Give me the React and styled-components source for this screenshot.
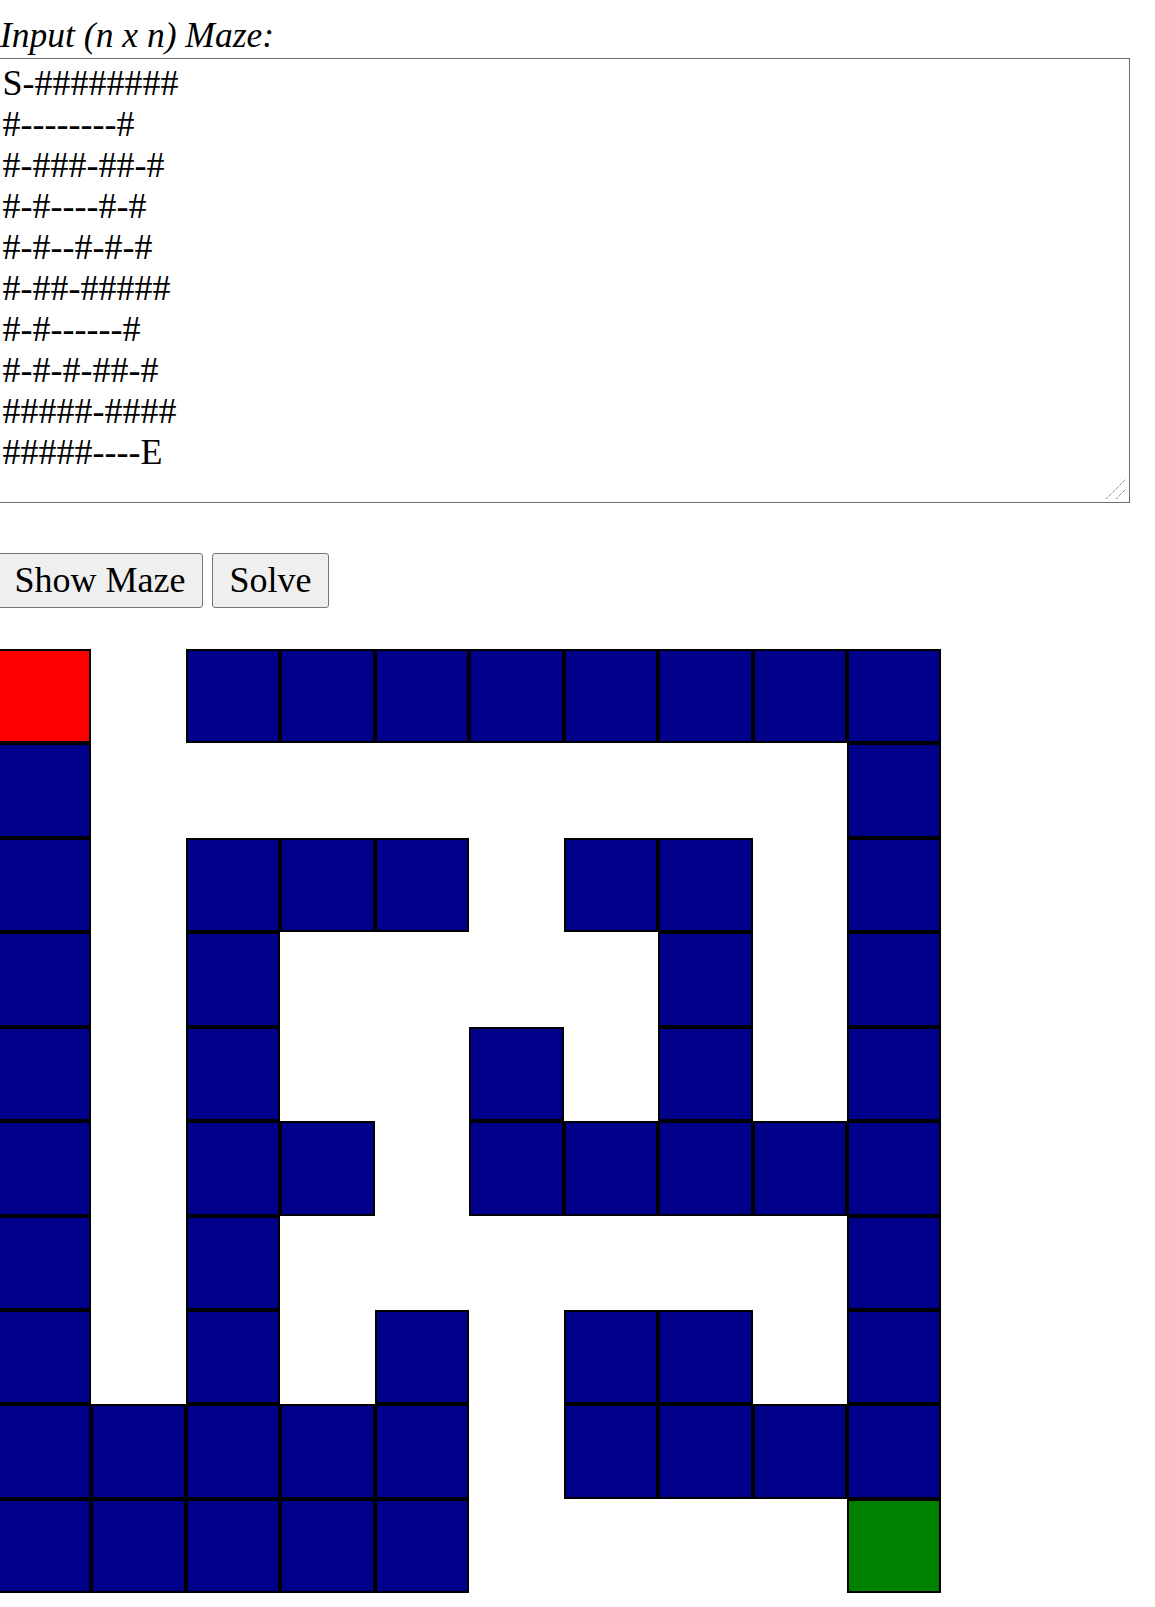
import React, { Component } from "react";
import styled, { createGlobalStyle } from "styled-components";

const MAZE = [
  "S-########",
  "#--------#",
  "#-###-##-#",
  "#-#----#-#",
  "#-#--#-#-#",
  "#-##-#####",
  "#-#------#",
  "#-#-#-##-#",
  "#####-####",
  "#####----E",
];

const CELL = 94.45;

const cellColors = {
  "#": "#00008b",
  S: "#ff0000",
  E: "#008000",
};

const GlobalStyle = createGlobalStyle`
  html, body {
    margin: 0;
    padding: 0;
    background: #ffffff;
  }
  body {
    font-family: "Liberation Serif", "Times New Roman", serif;
    color: #000000;
  }
`;

const Page = styled.div`
  margin-left: -3px;
  padding-top: 15px;
  padding-bottom: 13px;
`;

const Label = styled.label`
  display: block;
  font-style: italic;
  font-size: 35.5px;
  line-height: 40.9px;
  padding-left: 3px;
`;

const InputBox = styled.div`
  position: relative;
  width: 1133px;
  margin-top: 2px;
`;

const MazeInput = styled.textarea`
  display: block;
  box-sizing: border-box;
  width: 100%;
  height: 445px;
  padding: 4.5px;
  border: 1px solid #6b6b6b;
  border-radius: 0;
  font-family: "Liberation Serif", "Times New Roman", serif;
  font-size: 36px;
  line-height: 40.9px;
  color: #000000;
  background: #ffffff;
  outline: none;
  resize: none;
`;

const Grip = styled.svg`
  position: absolute;
  right: 2px;
  bottom: 2px;
  width: 24px;
  height: 24px;
  pointer-events: none;
`;

const ButtonRow = styled.div`
  display: flex;
  gap: 9px;
  margin-top: 50px;
`;

const Button = styled.button`
  box-sizing: border-box;
  height: 55px;
  padding: 6px 16.5px;
  border: 1px solid #767676;
  border-radius: 3px;
  background: #efefef;
  font-family: "Liberation Serif", "Times New Roman", serif;
  font-size: 36px;
  line-height: 40.9px;
  color: #000000;
  cursor: pointer;
`;

const Grid = styled.div`
  display: grid;
  grid-template-columns: repeat(10, ${CELL}px);
  grid-auto-rows: ${CELL}px;
  margin-top: 41px;
`;

const Cell = styled.div`
  box-sizing: border-box;
  background: ${(p) => p.$fill || "transparent"};
  border: 2px solid ${(p) => (p.$fill ? "#000000" : "transparent")};
`;

export default class App extends Component {
  state = {
    text: MAZE.join("\n"),
  };

  render() {
    const { text } = this.state;
    return (
      <Page>
        <GlobalStyle />
        <Label htmlFor="maze">Input (n x n) Maze:</Label>
        <InputBox>
          <MazeInput
            id="maze"
            spellCheck={false}
            value={text}
            onChange={(e) => this.setState({ text: e.target.value })}
          />
          <Grip viewBox="0 0 24 24">
            <line x1="2" y1="22" x2="22" y2="2" stroke="#555" strokeWidth="1" strokeDasharray="1 1" />
            <line x1="12" y1="22" x2="22" y2="12" stroke="#555" strokeWidth="1" strokeDasharray="1 1" />
          </Grip>
        </InputBox>
        <ButtonRow>
          <Button>Show Maze</Button>
          <Button>Solve</Button>
        </ButtonRow>
        <Grid>
          {MAZE.map((row, r) =>
            row.split("").map((ch, c) => (
              <Cell key={`${r}-${c}`} $fill={cellColors[ch]} />
            ))
          )}
        </Grid>
      </Page>
    );
  }
}
